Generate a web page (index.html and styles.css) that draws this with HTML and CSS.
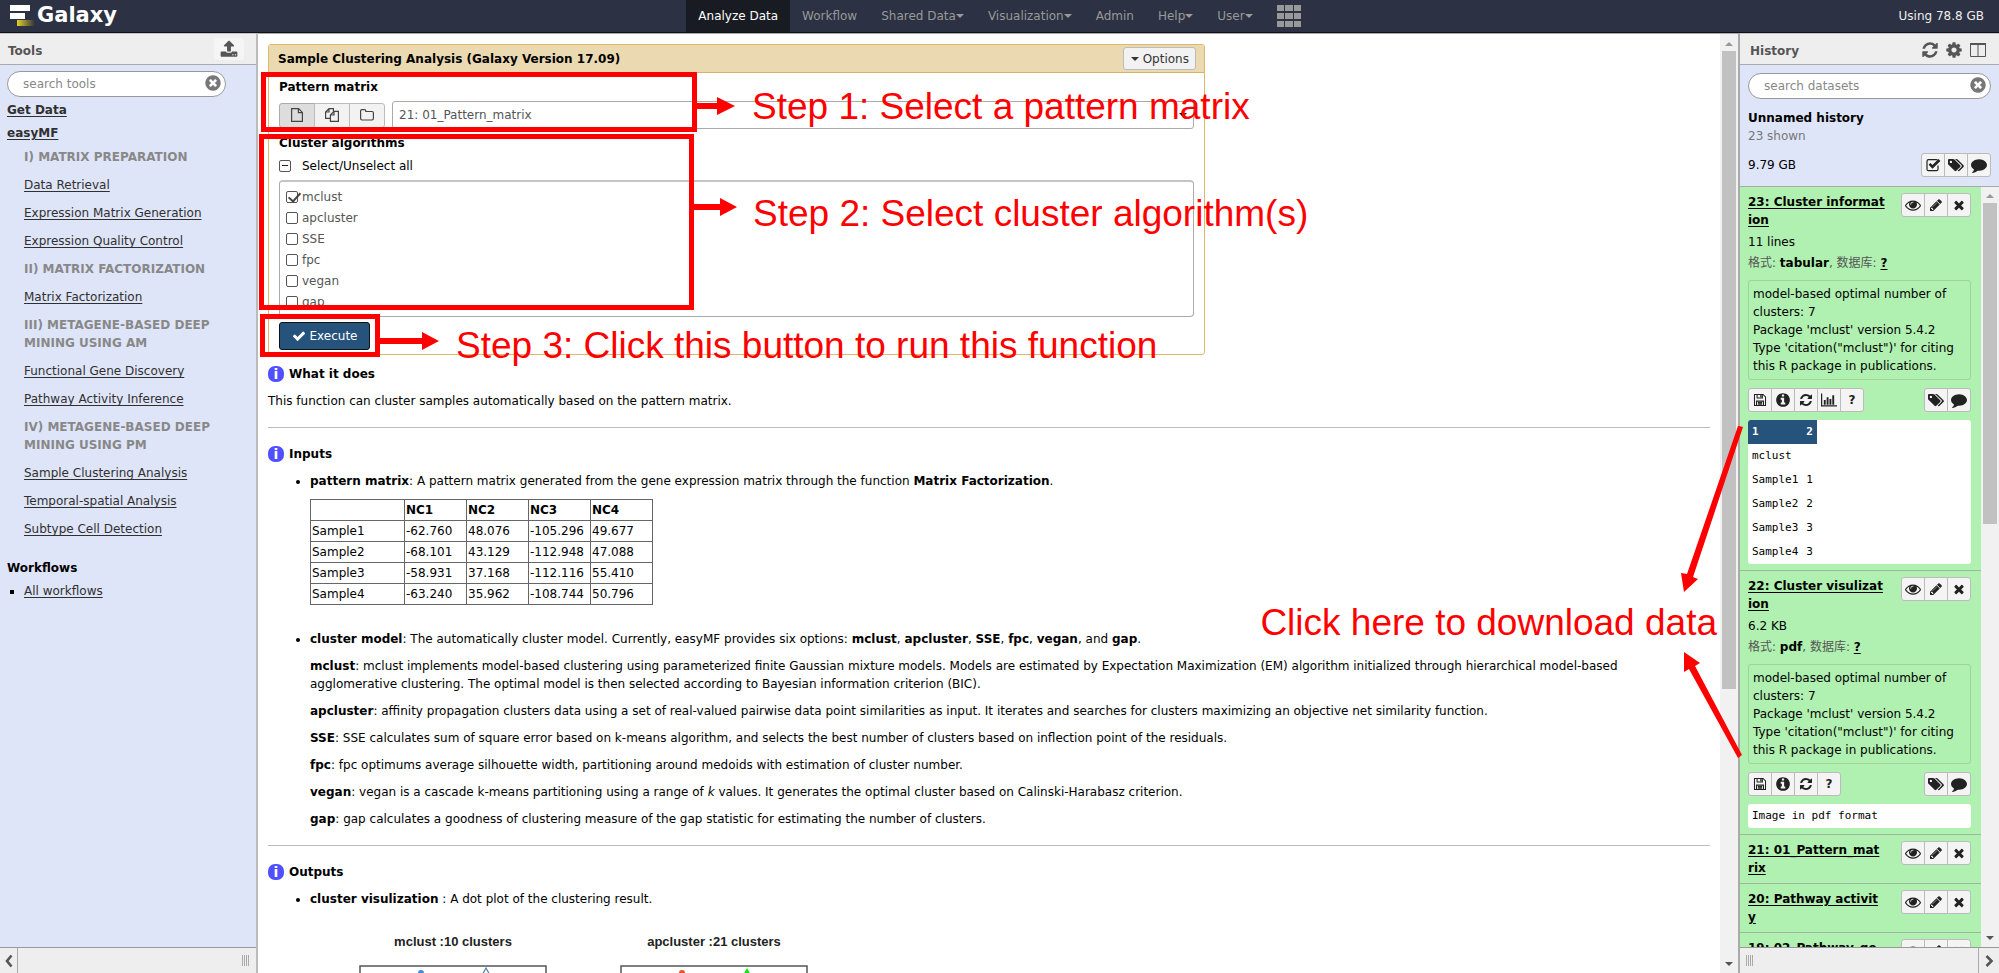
FILE: index.html
```html
<!DOCTYPE html>
<html lang="en">
<head>
<meta charset="utf-8">
<title>Galaxy</title>
<link rel="stylesheet" href="styles.css">
</head>
<body>
<svg class="sprite" aria-hidden="true">
  <symbol id="check" viewBox="0 0 1792 1792"><path d="M1671 566q0 40-28 68l-724 724-136 136q-28 28-68 28t-68-28l-136-136-362-362q-28-28-28-68t28-68l136-136q28-28 68-28t68 28l294 295 656-657q28-28 68-28t68 28l136 136q28 28 28 68z"/></symbol>
  <symbol id="times" viewBox="0 0 1792 1792"><path d="M1490 1322q0 40-28 68l-136 136q-28 28-68 28t-68-28l-294-294-294 294q-28 28-68 28t-68-28l-136-136q-28-28-28-68t28-68l294-294-294-294q-28-28-28-68t28-68l136-136q28-28 68-28t68 28l294 294 294-294q28-28 68-28t68 28l136 136q28 28 28 68t-28 68l-294 294 294 294q28 28 28 68z"/></symbol>
  <symbol id="pencil" viewBox="0 0 1792 1792"><path d="M491 1536l91-91-235-235-91 91v107h128v128h107zm523-928q0-22-22-22-10 0-17 7l-542 542q-7 7-7 17 0 22 22 22 10 0 17-7l542-542q7-7 7-17zm-54-192l416 416-832 832h-416v-416zm683 96q0 53-37 90l-166 166-416-416 166-165q36-38 90-38 53 0 91 38l235 234q37 39 37 91z"/></symbol>
  <symbol id="eye" viewBox="0 0 1792 1792"><path d="M1664 960q-152-236-381-353 61 104 61 225 0 185-131.5 316.5t-316.5 131.5-316.5-131.5-131.5-316.5q0-121 61-225-229 117-381 353 133 205 333.5 326.5t434.5 121.5 434.5-121.5 333.5-326.5zm-720-384q0-20-14-34t-34-14q-125 0-214.5 89.5t-89.5 214.5q0 20 14 34t34 14 34-14 14-34q0-86 61-147t147-61q20 0 34-14t14-34zm848 384q0 34-20 69-140 230-376.5 368.5t-499.5 138.5-499.5-139-376.5-368q-20-35-20-69t20-69q140-229 376.5-368t499.5-139 499.5 139 376.5 368q20 35 20 69z"/></symbol>
  <symbol id="refresh" viewBox="0 0 1792 1792"><path d="M1639 1056q0 5-1 7-64 268-268 434.5t-478 166.5q-146 0-282.5-55t-243.5-157l-129 129q-19 19-45 19t-45-19-19-45v-448q0-26 19-45t45-19h448q26 0 45 19t19 45-19 45l-137 137q71 66 161 102t187 36q134 0 250-65t186-179q11-17 53-117 8-23 30-23h192q13 0 22.5 9.5t9.5 22.5zm25-800v448q0 26-19 45t-45 19h-448q-26 0-45-19t-19-45 19-45l138-138q-148-137-349-137-134 0-250 65t-186 179q-11 17-53 117-8 23-30 23h-199q-13 0-22.5-9.5t-9.5-22.5v-7q65-268 270-434.5t480-166.5q146 0 284 55.5t245 156.5l130-129q19-19 45-19t45 19 19 45z"/></symbol>
  <symbol id="cog" viewBox="0 0 1792 1792"><path d="M1152 896q0-106-75-181t-181-75-181 75-75 181 75 181 181 75 181-75 75-181zm512-109v222q0 12-8 23t-20 13l-185 28q-19 54-39 91 35 50 107 138 10 12 10 25t-9 23q-27 37-99 108t-94 71q-12 0-26-9l-138-108q-44 23-91 38-16 136-29 186-7 28-36 28h-222q-14 0-24.5-8.5t-11.5-21.5l-28-184q-49-16-90-37l-141 107q-10 9-25 9-14 0-25-11-126-114-165-168-7-10-7-23 0-12 8-23 15-21 51-66.5t54-70.5q-27-50-41-99l-183-27q-13-2-21-12.5t-8-23.5v-222q0-12 8-23t19-13l186-28q14-46 39-92-40-57-107-138-10-12-10-24 0-10 9-23 26-36 98.5-107.5t94.5-71.5q13 0 26 10l138 107q44-23 91-38 16-136 29-186 7-28 36-28h222q14 0 24.5 8.5t11.5 21.5l28 184q49 16 90 37l142-107q9-9 24-9 13 0 25 10 129 119 165 170 7 8 7 22 0 12-8 23-15 21-51 66.5t-54 70.5q26 50 41 98l183 28q13 2 21 12.5t8 23.5z"/></symbol>
  <symbol id="columns" viewBox="0 0 18 16"><path fill="none" stroke="currentColor" d="M1.5 1.5h15v13h-15z"/><path d="M1 1h16v2H1zM8.5 2h1v12h-1z"/></symbol>
  <symbol id="clear" viewBox="0 0 1792 1792"><path d="M1277 1122q0-26-19-45l-181-181 181-181q19-19 19-45 0-27-19-46l-90-90q-19-19-46-19-26 0-45 19l-181 181-181-181q-19-19-45-19-27 0-46 19l-90 90q-19 19-19 46 0 26 19 45l181 181-181 181q-19 19-19 45 0 27 19 46l90 90q19 19 46 19 26 0 45-19l181-181 181 181q19 19 45 19 27 0 46-19l90-90q19-19 19-46zm387-226q0 209-103 385.5t-279.5 279.5-385.5 103-385.5-103-279.5-279.5-103-385.5 103-385.5 279.5-279.5 385.5-103 385.5 103 279.5 279.5 103 385.5z"/></symbol>
  <symbol id="info" viewBox="0 0 1792 1792"><path d="M1152 1376v-160q0-14-9-23t-23-9h-96v-512q0-14-9-23t-23-9h-320q-14 0-23 9t-9 23v160q0 14 9 23t23 9h96v320h-96q-14 0-23 9t-9 23v160q0 14 9 23t23 9h448q14 0 23-9t9-23zm-128-896v-160q0-14-9-23t-23-9h-192q-14 0-23 9t-9 23v160q0 14 9 23t23 9h192q14 0 23-9t9-23zm640 416q0 209-103 385.5t-279.5 279.5-385.5 103-385.5-103-279.5-279.5-103-385.5 103-385.5 279.5-279.5 385.5-103 385.5 103 279.5 279.5 103 385.5z"/></symbol>
  <symbol id="upload" viewBox="0 0 1792 1792"><path d="M1344 1472q0-26-19-45t-45-19-45 19-19 45 19 45 45 19 45-19 19-45zm256 0q0-26-19-45t-45-19-45 19-19 45 19 45 45 19 45-19 19-45zm128-224v320q0 40-28 68t-68 28h-1472q-40 0-68-28t-28-68v-320q0-40 28-68t68-28h427q21 56 70.5 92t110.5 36h256q61 0 110.5-36t70.5-92h427q40 0 68 28t28 68zm-325-648q-17 40-59 40h-256v448q0 26-19 45t-45 19h-256q-26 0-45-19t-19-45v-448h-256q-42 0-59-40-17-39 14-69l448-448q18-19 45-19t45 19l448 448q31 30 14 69z"/></symbol>
  <symbol id="comment" viewBox="0 0 1792 1792"><path d="M1792 896q0 174-120 321.5t-326 233-450 85.5q-70 0-145-8-198 175-460 242-49 14-114 22-17 2-30.5-9t-17.5-29v-1q-3-4-.5-12t2-10 4.5-9.5l6-9 7-8.5 8-9q7-8 31-34.5t34.5-38 31-39.5 32.5-51 27-59 26-76q-157-89-247.5-220t-90.5-281q0-130 71-248.5t191-204.5 286-136.5 348-50.5q244 0 450 85.5t326 233 120 321.5z"/></symbol>
  <symbol id="tags" viewBox="0 0 16 16"><path fill-rule="evenodd" d="M0 3.200C0 2.500.5 2 1.200 2H5c.6 0 1.300.3 1.700.7l5.500 5.500c.5.5.5 1.200 0 1.700l-3.900 3.900c-.5.5-1.200.5-1.700 0L1 8.200C.5 7.800 0 7 0 6.400zM2.900 3.700a1.200 1.200 0 1 0 0 2.400 1.200 1.200 0 0 0 0-2.400z"/><path d="M7 2h1.200c.6 0 1.300.3 1.700.7l5.600 5.500c.5.5.5 1.200 0 1.700l-3.900 3.900c-.7.7-1.300.5-1.900-.1l3.700-3.700c.6-.6.6-1.300 0-1.900z"/></symbol>
  <symbol id="checked" viewBox="0 0 16 16"><path fill="none" stroke="currentColor" stroke-width="1.200" d="M13 8.500v3.700c0 .8-.6 1.500-1.500 1.500h-8C2.600 13.700 2 13 2 12.200v-8c0-.9.600-1.500 1.500-1.500h8c.4 0 .8.1 1 .4"/><path fill="none" stroke="currentColor" stroke-width="2.600" d="M4.500 6.800l3 3L14.500 3"/></symbol>
  <symbol id="save" viewBox="0 0 16 16"><path fill="none" stroke="currentColor" stroke-width="1.200" d="M1.700 1.700h9.800l2.800 2.800v9.800H1.700zM4.700 1.700v4h6v-4M4 14.300v-5h8v5M5.500 11h5M5.500 12.700h5"/><path d="M8.300 2h1.500v3H8.300z"/></symbol>
  <symbol id="chart" viewBox="0 0 17 16"><path d="M0 1h1.300v12.700H17V15H0zM3 8h2v5H3zM6 5h2v8H6zM9 7h2v6H9zM12 3h2v10h-2z"/></symbol>
  <symbol id="file" viewBox="0 0 14 16"><path fill="none" stroke="currentColor" stroke-width="1.200" d="M1.600 1.600h7l3.800 3.800v9H1.600zM8.400 1.600v4h4"/></symbol>
  <symbol id="files" viewBox="0 0 16 16"><path fill="none" stroke="currentColor" stroke-width="1.200" d="M6.400 11.400H1.600V5L5 1.600h4.400v2.600M5 1.600V5H1.600M6.400 14.400V8L10 4.400h4.400v10zM10 4.400V8H6.400"/></symbol>
  <symbol id="folder" viewBox="0 0 16 16"><path fill="none" stroke="currentColor" stroke-width="1.200" d="M1.600 4c0-.8.6-1.400 1.400-1.400h2.500c.8 0 1.300.6 1.300 1.300v.6h6.200c.8 0 1.400.6 1.400 1.400v5.700c0 .8-.6 1.400-1.400 1.400H3c-.8 0-1.400-.6-1.400-1.400z"/></symbol>
  <symbol id="left" viewBox="0 0 10 14"><path fill="none" stroke="currentColor" stroke-width="2.600" d="M7.500 1.500L3 7l4.500 5.500"/></symbol>
  <symbol id="right" viewBox="0 0 10 14"><path fill="none" stroke="currentColor" stroke-width="2.600" d="M2.500 2L7.500 7l-5 5"/></symbol>
</svg>

<header class="masthead">
  <a class="brand" href="#">
    <svg class="logo" viewBox="0 0 26 22"><defs><linearGradient id="gold"><stop offset="0" stop-color="#e5cf22"/><stop offset="1" stop-color="#2c3143"/></linearGradient></defs><path fill="#fff" d="M0 0h20v6H0zM0 8h15v6H0z"/><path fill="url(#gold)" d="M7 15h18v6H7z"/></svg>
    <span>Galaxy</span>
  </a>
  <nav class="tabs">
    <a class="tab active" href="#">Analyze Data</a>
    <a class="tab" href="#">Workflow</a>
    <a class="tab" href="#">Shared Data<i class="caret"></i></a>
    <a class="tab" href="#">Visualization<i class="caret"></i></a>
    <a class="tab" href="#">Admin</a>
    <a class="tab" href="#">Help<i class="caret"></i></a>
    <a class="tab" href="#">User<i class="caret"></i></a>
    <a class="tab" href="#" aria-label="Apps"><svg class="apps" viewBox="0 0 24 24"><path d="M0 1h7v6H0zM8 1h8v6H8zM17 1h7v6h-7zM0 9h7v6H0zM8 9h8v6H8zM17 9h7v6h-7zM0 17h7v6H0zM8 17h8v6H8zM17 17h7v6h-7z"/></svg></a>
  </nav>
  <div class="quota">Using 78.8 GB</div>
</header>

<div class="columns">
  <aside class="panel tools">
    <div class="panel-head"><h2>Tools</h2><button class="upload" aria-label="Upload"><svg class="icon18"><use href="#upload"/></svg></button></div>
    <div class="panel-body">
      <div class="search"><input type="text" placeholder="search tools" aria-label="search tools"><svg class="icon18"><use href="#clear"/></svg></div>
      <nav class="toolmenu">
        <a class="section" href="#">Get Data</a>
        <a class="section" href="#">easyMF</a>
        <div class="group">
          <h3>I) MATRIX PREPARATION</h3>
          <a href="#">Data Retrieval</a>
          <a href="#">Expression Matrix Generation</a>
          <a href="#">Expression Quality Control</a>
          <h3>II) MATRIX FACTORIZATION</h3>
          <a href="#">Matrix Factorization</a>
          <h3>III) METAGENE-BASED DEEP<br>MINING USING AM</h3>
          <a href="#">Functional Gene Discovery</a>
          <a href="#">Pathway Activity Inference</a>
          <h3>IV) METAGENE-BASED DEEP<br>MINING USING PM</h3>
          <a href="#">Sample Clustering Analysis</a>
          <a href="#">Temporal-spatial Analysis</a>
          <a href="#">Subtype Cell Detection</a>
        </div>
        <h4>Workflows</h4>
        <ul class="flows"><li><a href="#">All workflows</a></li></ul>
      </nav>
    </div>
    <div class="panel-foot"><button class="collapse" aria-label="Collapse tools"><svg class="chev"><use href="#left"/></svg></button><span class="grip"></span></div>
  </aside>

  <main class="center">
    <div class="page">
      <form class="toolform">
        <div class="form-head"><h1>Sample Clustering Analysis (Galaxy Version 17.09)</h1><button type="button" class="options"><i class="caret"></i>Options</button></div>
        <div class="form-body">
          <label class="field" for="matrix">Pattern matrix</label>
          <div class="matrix-row">
            <div class="group-btn">
              <button type="button" class="on" aria-label="Single dataset"><svg class="icon16"><use href="#file"/></svg></button>
              <button type="button" aria-label="Multiple datasets"><svg class="icon16"><use href="#files"/></svg></button>
              <button type="button" aria-label="Collection"><svg class="icon16"><use href="#folder"/></svg></button>
            </div>
            <div class="picker"><select id="matrix"><option>21: 01_Pattern_matrix</option></select><i class="caret"></i></div>
          </div>
          <div class="field">Cluster algorithms</div>
          <label class="all"><input type="checkbox" class="box partial">Select/Unselect all</label>
          <div class="choices">
            <label><input type="checkbox" class="box" checked>mclust</label>
            <label><input type="checkbox" class="box">apcluster</label>
            <label><input type="checkbox" class="box">SSE</label>
            <label><input type="checkbox" class="box">fpc</label>
            <label><input type="checkbox" class="box">vegan</label>
            <label><input type="checkbox" class="box">gap</label>
          </div>
          <button type="button" class="execute"><svg class="icon14"><use href="#check"/></svg>Execute</button>
        </div>
      </form>

      <article class="help">
        <h2><span class="badge">i</span>What it does</h2>
        <p>This function can cluster samples automatically based on the pattern matrix.</p>
        <hr>
        <h2><span class="badge">i</span>Inputs</h2>
        <ul>
          <li><p><b>pattern matrix</b>: A pattern matrix generated from the gene expression matrix through the function <b>Matrix Factorization</b>.</p>
            <table class="data">
              <thead><tr><th class="wide"></th><th>NC1</th><th>NC2</th><th>NC3</th><th>NC4</th></tr></thead>
              <tbody>
                <tr><td>Sample1</td><td>-62.760</td><td>48.076</td><td>-105.296</td><td>49.677</td></tr>
                <tr><td>Sample2</td><td>-68.101</td><td>43.129</td><td>-112.948</td><td>47.088</td></tr>
                <tr><td>Sample3</td><td>-58.931</td><td>37.168</td><td>-112.116</td><td>55.410</td></tr>
                <tr><td>Sample4</td><td>-63.240</td><td>35.962</td><td>-108.744</td><td>50.796</td></tr>
              </tbody>
            </table>
          </li>
          <li>
            <p><b>cluster model</b>: The automatically cluster model. Currently, easyMF provides six options: <b>mclust</b>, <b>apcluster</b>, <b>SSE</b>, <b>fpc</b>, <b>vegan</b>, and <b>gap</b>.</p>
            <p><b>mclust</b>: mclust implements model-based clustering using parameterized finite Gaussian mixture models. Models are estimated by Expectation Maximization (EM) algorithm initialized through hierarchical model-based agglomerative clustering. The optimal model is then selected according to Bayesian information criterion (BIC).</p>
            <p><b>apcluster</b>: affinity propagation clusters data using a set of real-valued pairwise data point similarities as input. It iterates and searches for clusters maximizing an objective net similarity function.</p>
            <p><b>SSE</b>: SSE calculates sum of square error based on k-means algorithm, and selects the best number of clusters based on inflection point of the residuals.</p>
            <p><b>fpc</b>: fpc optimums average silhouette width, partitioning around medoids with estimation of cluster number.</p>
            <p><b>vegan</b>: vegan is a cascade k-means partitioning using a range of <i>k</i> values. It generates the optimal cluster based on Calinski-Harabasz criterion.</p>
            <p><b>gap</b>: gap calculates a goodness of clustering measure of the gap statistic for estimating the number of clusters.</p>
          </li>
        </ul>
        <hr>
        <h2><span class="badge">i</span>Outputs</h2>
        <ul><li><p><b>cluster visulization</b> : A dot plot of the clustering result.</p></li></ul>
        <div class="plots">
          <figure><figcaption>mclust :10 clusters</figcaption><svg class="plot" viewBox="0 0 188 60"><path fill="none" stroke="#555" stroke-width="1.500" d="M1 60V1h186v59"/><circle cx="62" cy="8" r="3" fill="#3a8fe0"/><path fill="none" stroke="#5580a8" stroke-width="1.200" d="M127 3l5 9h-10z"/></svg></figure>
          <figure><figcaption>apcluster :21 clusters</figcaption><svg class="plot" viewBox="0 0 188 60"><path fill="none" stroke="#555" stroke-width="1.500" d="M1 60V1h186v59"/><circle cx="62" cy="8" r="3" fill="#f4511e"/><path fill="#0e0" d="M127 3l5 9h-10z"/></svg></figure>
        </div>
      </article>
    </div>
    <div class="scroll"><i class="up"></i><span class="thumb thumb-main"></span><i class="down"></i></div>
  </main>

  <aside class="panel history">
    <div class="panel-head"><h2>History</h2><div class="head-icons">
      <button aria-label="Refresh"><svg class="icon18"><use href="#refresh"/></svg></button>
      <button aria-label="Settings"><svg class="icon18"><use href="#cog"/></svg></button>
      <button aria-label="View all"><svg class="icon18"><use href="#columns"/></svg></button></div></div>
    <div class="summary">
      <div class="search"><input type="text" placeholder="search datasets" aria-label="search datasets"><svg class="icon18"><use href="#clear"/></svg></div>
      <h3>Unnamed history</h3>
      <div class="shown">23 shown</div>
      <div class="size"><span>9.79 GB</span><div class="group-btn small">
        <button aria-label="Select"><svg class="icon16"><use href="#checked"/></svg></button><button aria-label="Tags"><svg class="icon16"><use href="#tags"/></svg></button><button aria-label="Annotation"><svg class="icon16"><use href="#comment"/></svg></button></div></div>
    </div>
    <div class="datasets">
      <div class="list">
        <section class="dataset">
          <div class="title"><a href="#">23: Cluster informat<br>ion</a><div class="group-btn small"><button aria-label="View"><svg class="icon16"><use href="#eye"/></svg></button><button aria-label="Edit"><svg class="icon14"><use href="#pencil"/></svg></button><button aria-label="Delete"><svg class="icon14"><use href="#times"/></svg></button></div></div>
          <div class="meta">11 lines</div>
          <div class="meta grey">格式: <b>tabular</b>, 数据库: <a href="#">?</a></div>
          <div class="blurb">model-based optimal number of<br>clusters: 7<br>Package 'mclust' version 5.4.2<br>Type 'citation("mclust")' for citing<br>this R package in publications.</div>
          <div class="actions"><div class="group-btn small"><button aria-label="Save"><svg class="icon14"><use href="#save"/></svg></button><button aria-label="Details"><svg class="icon16"><use href="#info"/></svg></button><button aria-label="Rerun"><svg class="icon14"><use href="#refresh"/></svg></button><button aria-label="Visualize"><svg class="icon16"><use href="#chart"/></svg></button><button>?</button></div>
          <div class="group-btn small"><button aria-label="Tags"><svg class="icon16"><use href="#tags"/></svg></button><button aria-label="Annotation"><svg class="icon16"><use href="#comment"/></svg></button></div></div>
          <div class="peek"><table><thead><tr><th>1</th><th>2</th></tr></thead><tbody><tr><td>mclust</td><td></td></tr><tr><td>Sample1</td><td>1</td></tr><tr><td>Sample2</td><td>2</td></tr><tr><td>Sample3</td><td>3</td></tr><tr><td>Sample4</td><td>3</td></tr></tbody></table></div>
        </section>
        <section class="dataset">
          <div class="title"><a href="#">22: Cluster visulizat<br>ion</a><div class="group-btn small"><button aria-label="View"><svg class="icon16"><use href="#eye"/></svg></button><button aria-label="Edit"><svg class="icon14"><use href="#pencil"/></svg></button><button aria-label="Delete"><svg class="icon14"><use href="#times"/></svg></button></div></div>
          <div class="meta">6.2 KB</div>
          <div class="meta grey">格式: <b>pdf</b>, 数据库: <a href="#">?</a></div>
          <div class="blurb">model-based optimal number of<br>clusters: 7<br>Package 'mclust' version 5.4.2<br>Type 'citation("mclust")' for citing<br>this R package in publications.</div>
          <div class="actions"><div class="group-btn small"><button aria-label="Save"><svg class="icon14"><use href="#save"/></svg></button><button aria-label="Details"><svg class="icon16"><use href="#info"/></svg></button><button aria-label="Rerun"><svg class="icon14"><use href="#refresh"/></svg></button><button>?</button></div>
          <div class="group-btn small"><button aria-label="Tags"><svg class="icon16"><use href="#tags"/></svg></button><button aria-label="Annotation"><svg class="icon16"><use href="#comment"/></svg></button></div></div>
          <div class="peek"><div class="line">Image in pdf format</div></div>
        </section>
        <section class="dataset">
          <div class="title"><a href="#">21: 01_Pattern_mat<br>rix</a><div class="group-btn small"><button aria-label="View"><svg class="icon16"><use href="#eye"/></svg></button><button aria-label="Edit"><svg class="icon14"><use href="#pencil"/></svg></button><button aria-label="Delete"><svg class="icon14"><use href="#times"/></svg></button></div></div>
        </section>
        <section class="dataset">
          <div class="title"><a href="#">20: Pathway activit<br>y</a><div class="group-btn small"><button aria-label="View"><svg class="icon16"><use href="#eye"/></svg></button><button aria-label="Edit"><svg class="icon14"><use href="#pencil"/></svg></button><button aria-label="Delete"><svg class="icon14"><use href="#times"/></svg></button></div></div>
        </section>
        <section class="dataset">
          <div class="title"><a href="#">19: 02_Pathway_ge</a><div class="group-btn small"><button aria-label="View"><svg class="icon16"><use href="#eye"/></svg></button><button aria-label="Edit"><svg class="icon14"><use href="#pencil"/></svg></button><button aria-label="Delete"><svg class="icon14"><use href="#times"/></svg></button></div></div>
        </section>
      </div>
      <div class="scroll"><i class="up"></i><span class="thumb thumb-side"></span><i class="down"></i></div>
    </div>
    <div class="panel-foot flip"><span class="grip"></span><button class="collapse" aria-label="Collapse history"><svg class="chev"><use href="#right"/></svg></button></div>
  </aside>
</div>

<div class="notes">
  <div class="frame frame-1"></div>
  <div class="frame frame-2"></div>
  <div class="frame frame-3"></div>
  <svg class="arrows-left" viewBox="0 0 760 400"><path d="M697 103h20v-6l18 9-18 9v-6h-20zM694 204h26v-6l17 9-17 9v-6h-26zM380 338h42v-6l17 9-17 9v-6h-42z"/></svg>
  <div class="note note-1">Step 1: Select a pattern matrix</div>
  <div class="note note-2">Step 2: Select cluster algorithm(s)</div>
  <div class="note note-3">Step 3: Click this button to run this function</div>
  <div class="note note-4">Click here to download data</div>
  <svg class="arrows-right" viewBox="0 0 80 350"><path d="M60 6l4 1-50 150 5 2-14 13-3-19 6 1L59 6zM5 232l16 11-5 3 47 89-4 3-49-89-5 3z"/></svg>
</div>
</body>
</html>
```
FILE: styles.css
```css
* { box-sizing: border-box; }
html, body { height: 100%; }
body {
  margin: 0;
  display: flex;
  flex-direction: column;
  position: relative;
  overflow: hidden;
  background: #fff;
  color: #000;
  font: 12px/18px "DejaVu Sans", "Noto Sans CJK SC", sans-serif;
}
h1, h2, h3, h4, p, ul, figure { margin: 0; padding: 0; font-size: 12px; }
button, input, select { font: inherit; color: inherit; }
button { cursor: pointer; padding: 0; }
a { color: #303030; text-underline-offset: 2px; }
svg { fill: currentColor; display: block; flex: none; }
.sprite { position: absolute; width: 0; height: 0; }
.icon14 { width: 14px; height: 14px; }
.icon16 { width: 16px; height: 16px; }
.icon18 { width: 18px; height: 18px; }
.caret { display: inline-block; border: 4px solid transparent; border-top-color: currentColor; border-bottom: 0; vertical-align: middle; }

/* masthead */
.masthead {
  flex: none;
  display: grid;
  grid-template-columns: 1fr auto 1fr;
  height: 33px;
  background: #2c3143;
  border-bottom: 1px solid #0f1118;
}
.brand { display: flex; align-items: center; gap: 1px; padding-left: 10px; color: #fff; font-size: 21px; font-weight: bold; text-decoration: none; }
.brand span { padding-bottom: 3px; }
.logo { width: 26px; height: 22px; }
.tabs { display: flex; }
.tab { display: flex; align-items: center; padding: 0 12px; color: #999; text-decoration: none; }
.tab.active { background: #191b22; color: #fff; }
.apps { width: 24px; height: 24px; }
.quota { align-self: center; justify-self: end; padding-right: 15px; color: #eee; }

/* panels */
.columns { flex: 1; min-height: 0; display: grid; grid-template-columns: 258px minmax(0, 1fr) 261px; }
.panel { display: flex; flex-direction: column; min-height: 0; background: #dfe5f9; }
.tools { border-right: 2px solid #bbb; }
.history { border-left: 2px solid #aaa; }
.panel-head {
  flex: none; display: flex; align-items: center; justify-content: space-between;
  height: 32px; padding: 4px 12px 0 8px;
  background: #eee; border-top: 1px solid #c4c4c8; border-bottom: 1px solid #aaa; color: #555;
}
.history .panel-head { padding-left: 10px; }
.upload { display: grid; place-items: center; width: 30px; height: 22px; margin-bottom: 4px; border: 0; border-radius: 3px; background: #f5f5f5; }
.head-icons { display: flex; gap: 6px; padding-bottom: 3px; }
.head-icons button { border: 0; background: none; }
.panel-body { flex: 1; min-height: 0; overflow: hidden; padding: 6px 30px 0 7px; }
.search { position: relative; }
.search input { width: 100%; height: 26px; padding: 0 15px; border: 1px solid #999; border-radius: 13px; background: #fff; outline: 0; }
.search input::placeholder { color: #888; opacity: 1; }
.search svg { position: absolute; right: 4px; top: 3px; color: #777; }
.toolmenu { display: flex; flex-direction: column; padding-top: 4px; }
.section { font-weight: bold; margin-bottom: 5px; }
.group { display: flex; flex-direction: column; align-items: flex-start; gap: 10px; padding: 1px 0 0 17px; white-space: nowrap; }
.group h3 { color: #888; }
.toolmenu h4 { margin-top: 21px; }
.flows { list-style: square; padding: 5px 0 0 17px; }
.panel-foot { flex: none; display: flex; align-items: center; justify-content: space-between; height: 26px; padding-right: 6px; background: #eee; border-top: 1px solid #999; }
.panel-foot.flip { padding: 0 0 0 6px; }
.collapse { display: grid; place-items: center; width: 18px; height: 25px; border: 0; border-right: 1px solid #aaa; background: none; color: #555; }
.flip .collapse { width: 21px; border-right: 0; border-left: 1px solid #aaa; }
.chev { width: 10px; height: 14px; }
.grip { width: 8px; height: 11px; background: repeating-linear-gradient(90deg, #aaa 0 1px, transparent 1px 2px); }

/* drawn scrollbars */
.scroll { display: flex; flex-direction: column; align-items: center; flex: none; width: 18px; padding: 8px 0 7px; background: #f1f1f1; }
.up { border: 4px solid transparent; border-bottom-color: #999; border-top: 0; }
.down { margin-top: auto; border: 4px solid transparent; border-top-color: #555; border-bottom: 0; }
.thumb { width: 14px; margin-top: 5px; background: #c1c1c1; }
.thumb-main { height: 69%; }
.thumb-side { height: 43%; }

/* center */
.center { display: flex; min-height: 0; background: #fff; border-top: 1px solid #aaa; }
.page { flex: 1; min-width: 0; overflow: hidden; padding: 10px 10px 0; }
.toolform { width: 65%; border: 1px solid #ddb96e; border-radius: 3px; }
.form-head { display: flex; align-items: center; justify-content: space-between; height: 28px; padding: 0 8px 0 9px; background: #ebd9b2; border-bottom: 1px solid #d8b365; }
.options { display: flex; align-items: center; justify-content: center; gap: 4px; width: 73px; height: 23px; border: 1px solid #bbb; border-radius: 3px; background: #f2f2f2; color: #333; }
.form-body { display: flex; flex-direction: column; padding: 5px 10px 4px; }
.field { font-weight: bold; }
.matrix-row { display: flex; align-items: center; gap: 7px; padding: 5px 0; }
.group-btn { display: flex; color: #444; }
.group-btn button { display: grid; place-items: center; width: 36px; height: 25px; margin-right: -1px; border: 1px solid #bbb; background: #f2f2f2; }
.group-btn button:first-child { border-radius: 3px 0 0 3px; }
.group-btn button:last-child { border-radius: 0 3px 3px 0; margin-right: 0; }
.group-btn .on { background: #ddd; border-color: #aaa; }
.group-btn.small { color: #222; }
.group-btn.small button { width: 24px; height: 24px; font-weight: bold; background: #f4f4f4; }
.picker { flex: 1; display: flex; align-items: center; border: 1px solid #aaa; border-radius: 3px; height: 28px; padding-right: 6px; }
.picker select { flex: 1; appearance: none; border: 0; outline: 0; background: none; padding: 0 6px; color: #555; }
.all { display: flex; align-items: center; gap: 11px; padding: 5px 0; }
.box { appearance: none; position: relative; width: 12px; height: 12px; margin: 0; border: 1px solid #555; border-radius: 2px; background: #fff; }
.box:checked::after { content: ""; position: absolute; left: 4px; top: -2px; width: 5px; height: 10px; border: solid #444; border-width: 0 2px 2px 0; transform: rotate(42deg); }
.partial::after { content: ""; position: absolute; left: 2px; right: 2px; top: 4px; height: 1px; background: #222; }
.choices { display: flex; flex-direction: column; height: 137px; padding: 4px 6px; overflow: hidden; border: 1px solid #aaa; border-top: 2px solid #c4c4c4; border-radius: 4px; color: #555; }
.choices label { flex: none; display: flex; align-items: center; gap: 4px; height: 21px; }
.execute { display: flex; align-items: center; justify-content: center; gap: 4px; width: 91px; height: 28px; margin-top: 5px; border: 1px solid #111; border-radius: 3px; background: #25537b; color: #fff; }

/* help text */
.help { padding-top: 10px; }
.help h2 { display: flex; align-items: center; gap: 5px; }
.badge { display: grid; place-items: center; width: 16px; height: 16px; border-radius: 7px; background: #5050ff; color: #fff; font: bold 14px/16px "DejaVu Sans", sans-serif; }
.help p { padding-top: 9px; }
.help hr { margin: 17px 0; border: 0; border-top: 1px solid #bbb; }
.help ul { padding: 0 16px 0 42px; }
.data { margin: 9px 0 16px; border-collapse: collapse; border: 1px solid #333; table-layout: fixed; width: 342px; }
.data th, .data td { width: 62px; height: 21px; padding: 1px; border: 1px solid #666; text-align: left; }
.data .wide { width: 94px; }
.plots { display: flex; gap: 73px; padding: 25px 0 0 91px; }
.plots figcaption { text-align: center; font: bold 13px/18px "Liberation Sans", sans-serif; color: #222; }
.plot { width: 188px; height: 60px; margin-top: 14px; }

/* history */
.summary { flex: none; padding: 8px 8px 9px; border-bottom: 1px solid #aaa; }
.summary h3 { margin-top: 10px; }
.shown { color: #777; }
.size { display: flex; align-items: center; justify-content: space-between; margin-top: 8px; }
.datasets { flex: 1; min-height: 0; display: flex; }
.datasets .scroll { padding-top: 7px; }
.list { flex: 1; min-width: 0; overflow: hidden; background: #b0f0b0; }
.dataset { padding: 6px 10px 6px 8px; border-bottom: 1px solid #9ab99a; }
.title { display: flex; justify-content: space-between; white-space: nowrap; font-weight: bold; }
.title a { color: #000; }
.dataset a { color: #000; }
.meta { margin-top: 4px; }
.meta + .meta { margin-top: 3px; }
.meta a { font-weight: bold; }
.grey { color: #555; }
.grey b { color: #000; }
.blurb { margin-top: 8px; padding: 4px; border: 1px solid #9cd49c; border-radius: 3px; white-space: nowrap; }
.actions { display: flex; justify-content: space-between; margin-top: 8px; }
.peek { margin-top: 8px; overflow: hidden; border-radius: 3px; background: #fff; font: 11px/24px "DejaVu Sans Mono", monospace; }
.peek table { border-collapse: collapse; }
.peek th, .peek td { height: 24px; padding: 0 4px; text-align: left; }
.peek th { background: #25537b; color: #fff; }
.line { padding: 0 4px; }

/* callouts over the page */
.notes { position: absolute; inset: 0; overflow: hidden; pointer-events: none; color: #f00; font: 37px/42px "Liberation Sans", Arial, sans-serif; white-space: nowrap; }
.frame, .note, .arrows-left, .arrows-right { position: absolute; }
.frame { border: 5px solid #f00; }
.frame-1 { left: 261px; top: 72px; width: 436px; height: 60px; }
.frame-2 { left: 259px; top: 134px; width: 435px; height: 176px; }
.frame-3 { left: 260px; top: 314px; width: 120px; height: 43px; }
.arrows-left { left: 0; top: 0; width: 760px; height: 400px; }
.arrows-right { right: 240px; top: 420px; width: 80px; height: 350px; }
.note-1 { left: 752px; top: 86px; }
.note-2 { left: 753px; top: 193px; }
.note-3 { left: 456px; top: 325px; }
.note-4 { right: 282px; top: 602px; }
```
